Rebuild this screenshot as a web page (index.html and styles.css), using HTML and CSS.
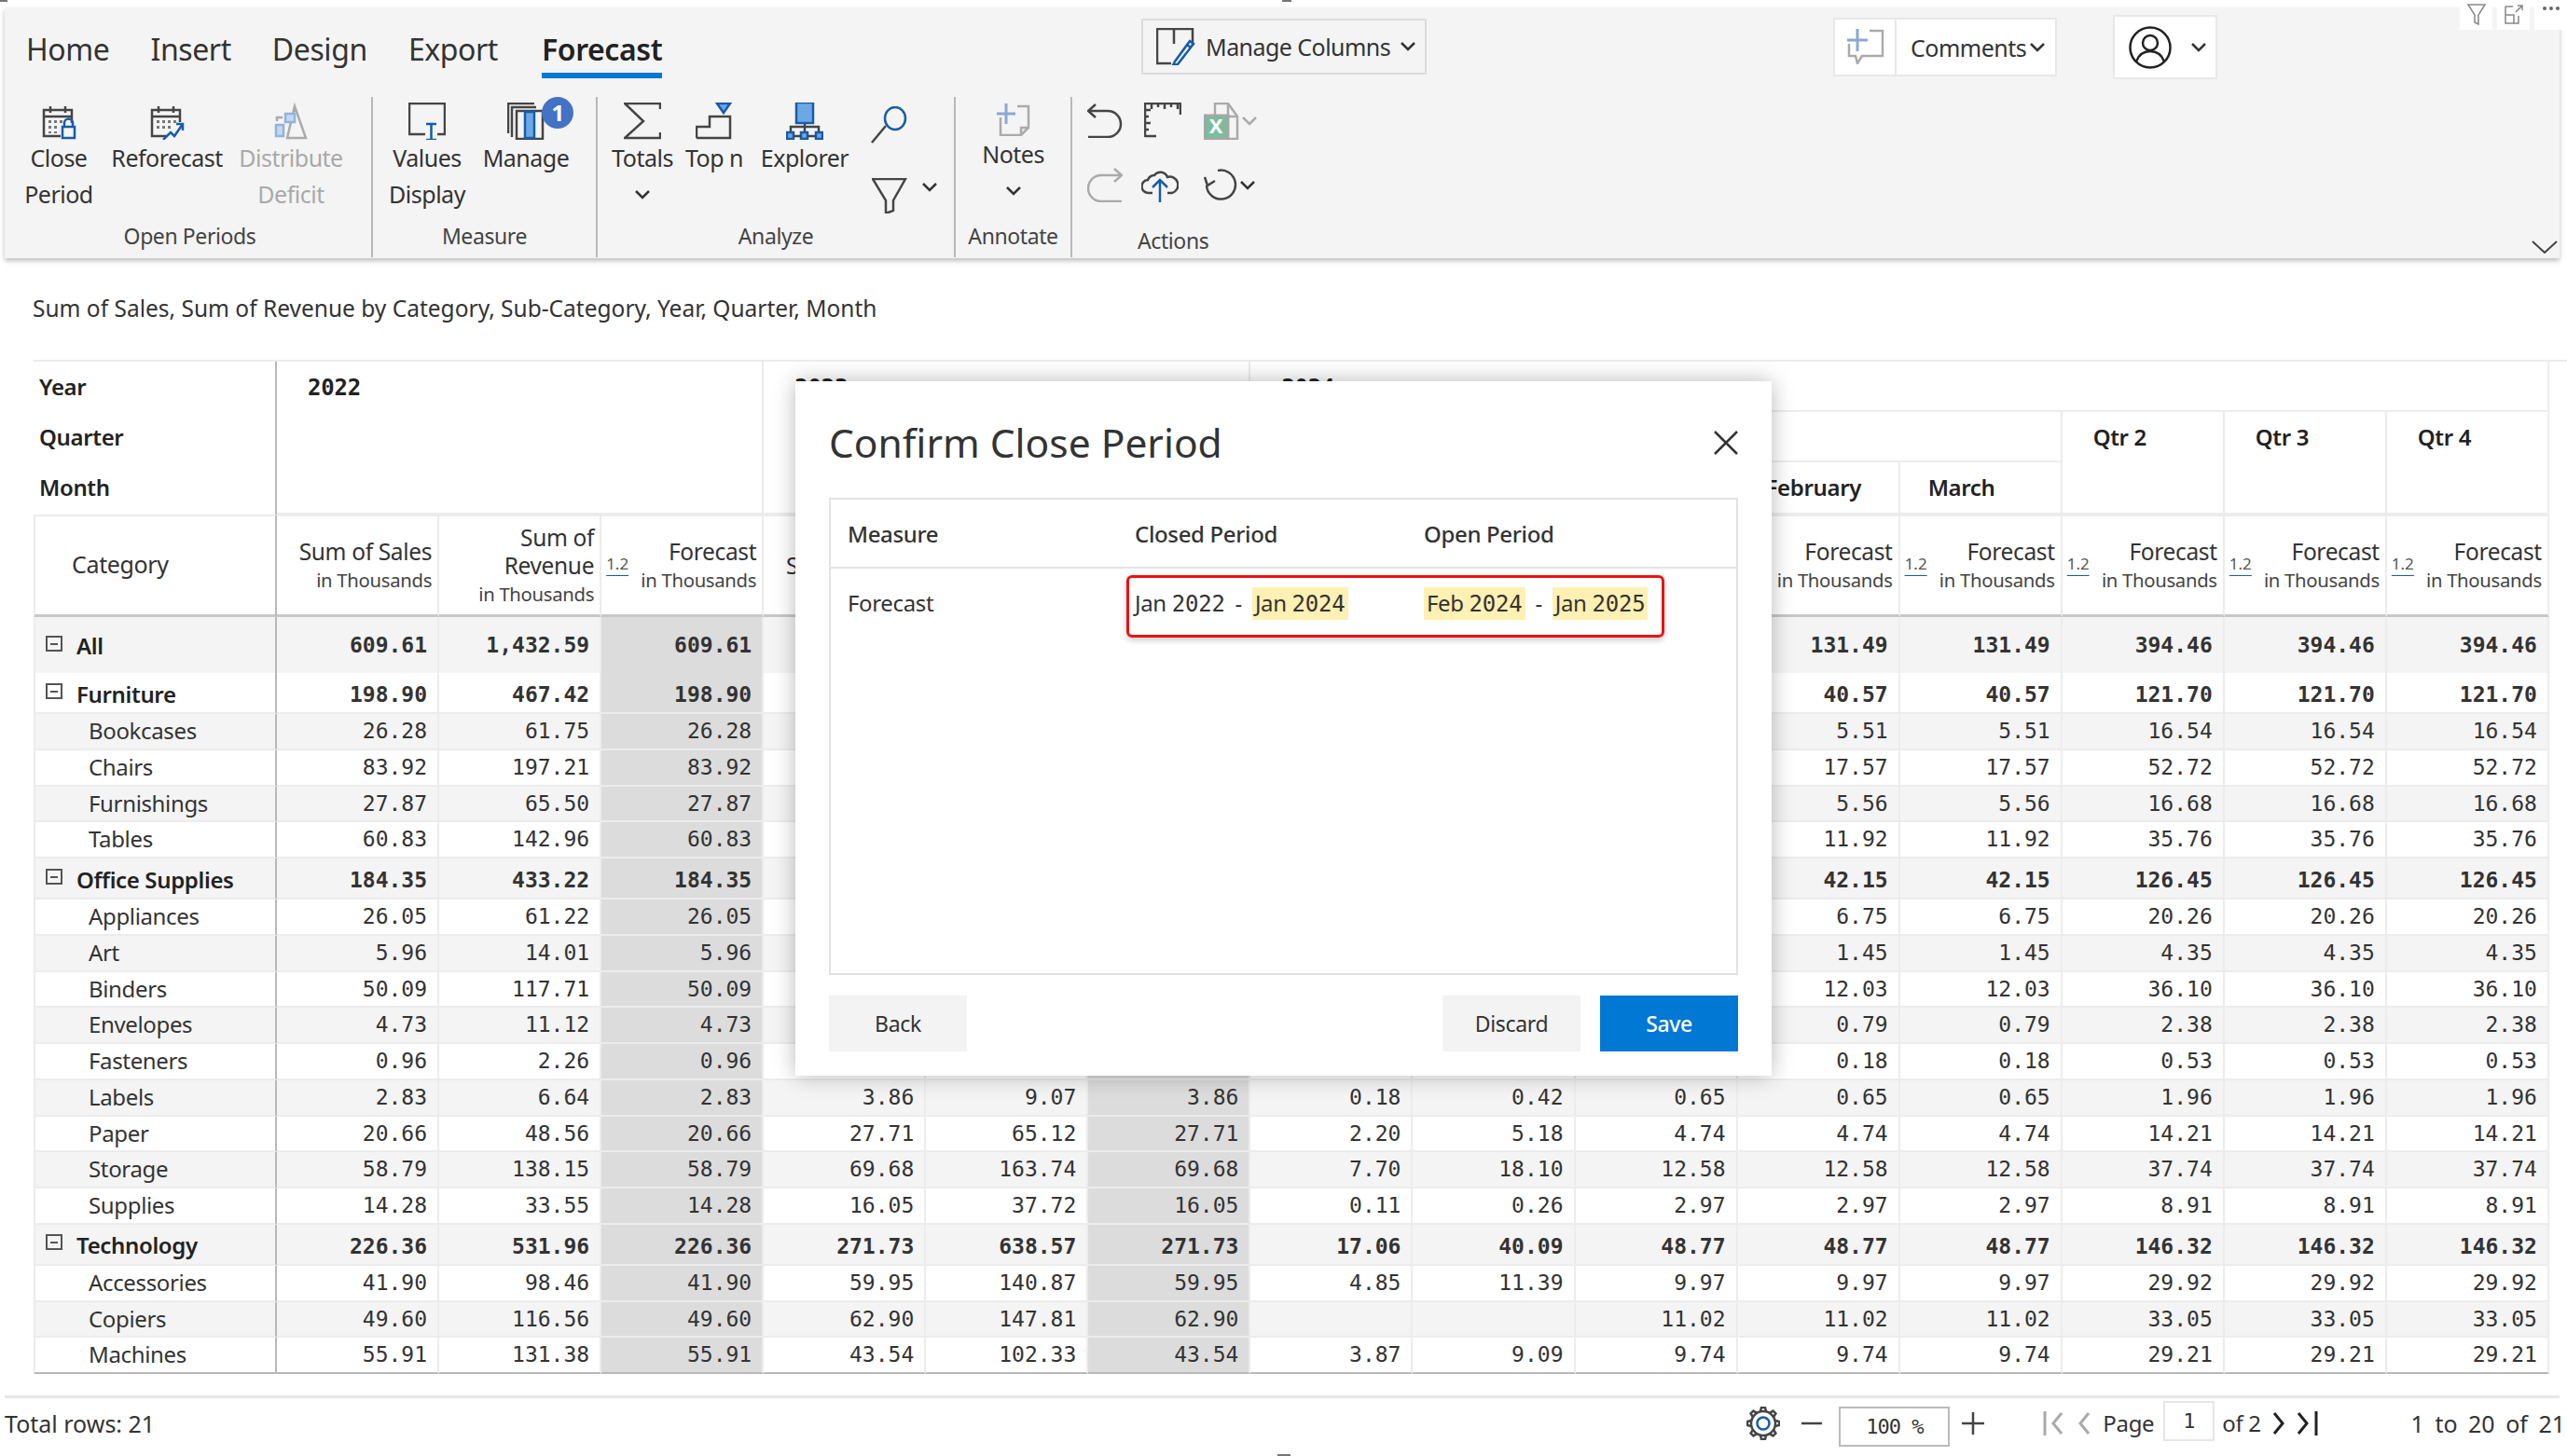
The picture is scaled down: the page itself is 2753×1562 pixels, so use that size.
FILE: index.html
```html
<!DOCTYPE html>
<html lang="en">
<head>
    <meta charset="UTF-8">
    <title>Confirm Close Period</title>
    <link rel="stylesheet" href="styles.css">
</head>
<body>
<div class="page">
    <i class="grip grip-a"></i><i class="grip grip-b"></i><i class="grip grip-c"></i>

    <!-- Ribbon -->
    <header class="ribbon">
        <div class="top-tools">
            <span><svg width="22" height="24" viewBox="0 0 22 24" class="ic thin"><path d="M2 1h18l-7 11v10l-4-2v-8z"/></svg></span>
            <span><svg width="22" height="22" viewBox="0 0 22 22" class="ic thin"><path d="M2 3h8M2 3v18h14v-8M2 12h9v9M13 9l7-7M15 2h5v5"/></svg></span>
            <span><svg width="22" height="10" viewBox="0 0 22 10" class="tool-dots"><circle cx="4" cy="5" r="2"/><circle cx="11" cy="5" r="2"/><circle cx="18" cy="5" r="2"/></svg></span>
        </div>
        <nav class="tabs">
            <a>Home</a><a>Insert</a><a>Design</a><a>Export</a><a class="active">Forecast</a>
        </nav>
        <div class="ribbon-body">
            <section class="group g-open">
                <div class="btns">
                    <div class="rbtn">
                        <svg width="40" height="40" viewBox="0 0 40 40" class="ic"><path d="M22 36H4V8h30v14M4 15h30M11 4v7M27 4v7"/><path class="dots-fill" d="M9 19h3v3H9zM15 19h3v3h-3zM21 19h3v3h-3zM9 25h3v3H9zM15 25h3v3h-3zM9 31h3v2H9zM15 31h3v2h-3z"/><path class="blue" d="M24 26h13v12H24zM26 26v-4a4 4 0 0 1 9 0v4"/></svg>
                        <span>Close<br>Period</span>
                    </div>
                    <div class="rbtn">
                        <svg width="40" height="40" viewBox="0 0 40 40" class="ic"><path d="M20 36H4V8h30v13M4 15h30M11 4v7M27 4v7"/><path class="dots-fill" d="M9 19h3v3H9zM15 19h3v3h-3zM21 19h3v3h-3zM27 19h3v3h-3zM9 25h3v3H9zM15 25h3v3h-3zM21 25h3v3h-3z"/><path class="blue" d="M16 40l8-8 4 4 9-13M30 23h7v7"/></svg>
                        <span>Reforecast</span>
                    </div>
                    <div class="rbtn off">
                        <svg width="40" height="40" viewBox="0 0 40 40" class="ic grey"><path d="M16 38l8-34 12 34zM24 4v6"/><rect class="tint" x="14" y="12" width="10" height="9"/><rect class="tint" x="4" y="24" width="8" height="12"/><path d="M5 20v-4h6"/></svg>
                        <span>Distribute<br>Deficit</span>
                    </div>
                </div>
                <div class="group-label">Open Periods</div>
            </section>

            <section class="group g-measure">
                <div class="btns">
                    <div class="rbtn">
                        <svg width="40" height="40" viewBox="0 0 40 40" class="ic"><path d="M18 34H1V1h38v33h-8"/><path class="blue" d="M19 23h11M19 40h11M24.500 23v17"/></svg>
                        <span>Values<br>Display</span>
                    </div>
                    <div class="rbtn manage">
                        <svg width="40" height="40" viewBox="0 0 40 40" class="ic"><path d="M1 33V1h28M5 37V5h26M10 39V9h28v30z"/><rect class="tint-strong" x="19" y="10" width="10" height="28"/></svg>
                        <span>Manage</span>
                        <b class="badge">1</b>
                    </div>
                </div>
                <div class="group-label">Measure</div>
            </section>

            <section class="group g-analyze">
                <div class="btns">
                    <div class="rbtn">
                        <svg width="40" height="40" viewBox="0 0 40 40" class="ic"><path d="M39 7V1H1l20 19L1 38h38v-6"/></svg>
                        <span>Totals</span>
                        <svg class="chev" width="16" height="10" viewBox="0 0 16 10"><path d="M1 1l7 7 7-7"/></svg>
                    </div>
                    <div class="rbtn">
                        <svg width="40" height="40" viewBox="0 0 40 40" class="ic"><path d="M1 38V26h14V15h14M1 38h36V15h-8"/><path class="blue tint-strong" d="M23 1h14l-7 10z"/></svg>
                        <span>Top n</span>
                    </div>
                    <div class="rbtn">
                        <svg width="40" height="40" viewBox="0 0 40 40" class="ic"><path d="M20 22v10M5 32v-6h30v6"/><rect class="blue tint-strong" x="11" y="0" width="18" height="22"/><rect class="blue tint-strong" x="1" y="32" width="7" height="7"/><rect class="blue tint-strong" x="16" y="32" width="7" height="7"/><rect class="blue tint-strong" x="32" y="32" width="7" height="7"/><path d="M8 36h8M23 36h9"/></svg>
                        <span>Explorer</span>
                    </div>
                    <div class="stack">
                        <svg width="40" height="40" viewBox="0 0 40 40" class="ic mag"><path d="M1 39l15-18"/><ellipse class="blue" cx="26" cy="13" rx="11" ry="12"/></svg>
                        <svg width="38" height="38" viewBox="0 0 38 38" class="ic filter"><path d="M1 1h35L23 24v11l-8 3V24z"/></svg>
                    </div>
                    <svg class="chev filter-chev" width="16" height="10" viewBox="0 0 16 10"><path d="M1 1l7 7 7-7"/></svg>
                </div>
                <div class="group-label">Analyze</div>
            </section>

            <section class="group g-annotate">
                <div class="btns">
                    <div class="rbtn notes">
                        <svg width="36" height="36" viewBox="0 0 36 36" class="ic grey"><path d="M22 4h12v23l-8 8H4V16M34 27h-8v8"/><path class="tint-line" d="M0 12h20M10 1v22"/></svg>
                        <span>Notes</span>
                        <svg class="chev" width="16" height="10" viewBox="0 0 16 10"><path d="M1 1l7 7 7-7"/></svg>
                    </div>
                </div>
                <div class="group-label">Annotate</div>
            </section>

            <section class="group g-actions">
                <div class="action-grid">
                    <svg width="38" height="38" viewBox="0 0 38 38" class="ic"><path d="M9 2L1 9l8 7M2 9h20a14 14 0 0 1 0 28H1"/></svg>
                    <svg width="40" height="38" viewBox="0 0 40 38" class="ic"><path d="M1 37V1h38v12M8 1v6M15 1v4M22 1v6M29 1v4M36 1v6M1 8h6M1 15h4M1 22h6M1 29h4M1 36h12"/></svg>
                    <div class="xl">
                        <svg width="38" height="40" viewBox="0 0 38 40" class="ic grey"><path d="M12 14V1h14l10 14v24H26"/><path d="M26 1v14h10"/><rect x="0" y="14" width="26" height="25" class="xl-box"/><text x="13" y="33" class="xl-x">X</text></svg>
                        <svg class="chev chev-off" width="16" height="10" viewBox="0 0 16 10"><path d="M1 1l7 7 7-7"/></svg>
                    </div>
                    <svg width="38" height="38" viewBox="0 0 38 38" class="ic grey"><path d="M29 2l8 7-8 7M36 9H15a14 14 0 0 0 0 28h22"/></svg>
                    <svg class="cloud" width="40" height="38" viewBox="0 0 40 38"><path d="M12 28H8a7 7 0 0 1-1-14 8 8 0 0 1 7-5 8 8 0 0 1 14 2 8 8 0 0 1 5 17h-5"/><path class="cloud-arrow" d="M20 38V14M12 22l8-8 8 8"/></svg>
                    <div class="xl">
                        <svg width="36" height="36" viewBox="0 0 36 36" class="ic"><path d="M15 2a15.500 15.500 0 1 1-12 16M1 9l3 9 8-5"/></svg>
                        <svg class="chev" width="16" height="10" viewBox="0 0 16 10"><path d="M1 1l7 7 7-7"/></svg>
                    </div>
                </div>
                <div class="group-label">Actions</div>
            </section>
        </div>

        <div class="manage-columns">
            <svg width="42" height="40" viewBox="0 0 42 40" class="ic"><path d="M16 38H1V1h38v18M19 1v16"/><path class="blue" d="M20 36l-2 4 5-1 17-22-4-3zM33 18l4 3"/></svg>
            <span>Manage Columns</span>
            <svg class="chev" width="16" height="10" viewBox="0 0 16 10"><path d="M1 1l7 7 7-7"/></svg>
        </div>
        <div class="comments">
            <div class="comments-icon">
                <svg width="40" height="40" viewBox="0 0 40 40" class="ic grey"><path d="M24 4h14v27H16l-5 8-2-8H2V18"/><path class="tint-line" d="M0 14h22M11 2v24"/></svg>
            </div>
            <div class="comments-text">Comments<svg class="chev" width="16" height="10" viewBox="0 0 16 10"><path d="M1 1l7 7 7-7"/></svg></div>
        </div>
        <div class="user">
            <svg width="46" height="46" viewBox="0 0 46 46" class="ic dark"><circle cx="23" cy="23" r="21.500"/><circle cx="23" cy="18" r="8"/><path d="M8 38c3-8 9-11 15-11s12 3 15 11"/></svg>
            <svg class="chev" width="16" height="10" viewBox="0 0 16 10"><path d="M1 1l7 7 7-7"/></svg>
        </div>
        <svg class="collapse" width="28" height="14" viewBox="0 0 28 14"><path d="M1 1l13 12L27 1"/></svg>
    </header>

    <div class="subtitle">Sum of Sales, Sum of Revenue by Category, Sub-Category, Year, Quarter, Month</div>

    <!-- Pivot table -->
    <div class="pivot">
        <div class="dim r1">Year</div>
        <div class="dim r2">Quarter</div>
        <div class="dim r3">Month</div>
        <div class="head y2022"><span class="mono">2022</span></div>
        <div class="head y2023"><span class="mono">2023</span></div>
        <div class="head y2024"><span class="mono">2024</span></div>
        <div class="head q1"></div>
        <div class="head q2">Qtr 2</div>
        <div class="head q3">Qtr 3</div>
        <div class="head q4">Qtr 4</div>
        <div class="head m1"></div>
        <div class="head m2">February</div>
        <div class="head m3">March</div>

        <div class="measure cat">Category</div>
        <div class="measure"><div class="mname">Sum of Sales<small>in Thousands</small></div></div>
        <div class="measure"><div class="mname">Sum of<br>Revenue<small>in Thousands</small></div></div>
        <div class="measure"><u>1.2</u><div class="mname">Forecast<small>in Thousands</small></div></div>
        <div class="measure"><div class="mname">Sum of Sales</div></div>
        <div class="measure"></div>
        <div class="measure"></div>
        <div class="measure"></div>
        <div class="measure"></div>
        <div class="measure"></div>
        <div class="measure"><div class="mname">Forecast<small>in Thousands</small></div></div>
        <div class="measure"><u>1.2</u><div class="mname">Forecast<small>in Thousands</small></div></div>
        <div class="measure"><u>1.2</u><div class="mname">Forecast<small>in Thousands</small></div></div>
        <div class="measure"><u>1.2</u><div class="mname">Forecast<small>in Thousands</small></div></div>
        <div class="measure"><u>1.2</u><div class="mname">Forecast<small>in Thousands</small></div></div>

        <div class="row total shade"><div><i class="tree"></i>All</div><div>609.61</div><div>1,432.59</div><div>609.61</div><div></div><div></div><div></div><div></div><div></div><div></div><div>131.49</div><div>131.49</div><div>394.46</div><div>394.46</div><div>394.46</div></div>
        <div class="row group-row"><div><i class="tree"></i>Furniture</div><div>198.90</div><div>467.42</div><div>198.90</div><div></div><div></div><div></div><div></div><div></div><div></div><div>40.57</div><div>40.57</div><div>121.70</div><div>121.70</div><div>121.70</div></div>
        <div class="row shade"><div>Bookcases</div><div>26.28</div><div>61.75</div><div>26.28</div><div></div><div></div><div></div><div></div><div></div><div></div><div>5.51</div><div>5.51</div><div>16.54</div><div>16.54</div><div>16.54</div></div>
        <div class="row"><div>Chairs</div><div>83.92</div><div>197.21</div><div>83.92</div><div></div><div></div><div></div><div></div><div></div><div></div><div>17.57</div><div>17.57</div><div>52.72</div><div>52.72</div><div>52.72</div></div>
        <div class="row shade"><div>Furnishings</div><div>27.87</div><div>65.50</div><div>27.87</div><div></div><div></div><div></div><div></div><div></div><div></div><div>5.56</div><div>5.56</div><div>16.68</div><div>16.68</div><div>16.68</div></div>
        <div class="row"><div>Tables</div><div>60.83</div><div>142.96</div><div>60.83</div><div></div><div></div><div></div><div></div><div></div><div></div><div>11.92</div><div>11.92</div><div>35.76</div><div>35.76</div><div>35.76</div></div>
        <div class="row group-row shade"><div><i class="tree"></i>Office Supplies</div><div>184.35</div><div>433.22</div><div>184.35</div><div></div><div></div><div></div><div></div><div></div><div></div><div>42.15</div><div>42.15</div><div>126.45</div><div>126.45</div><div>126.45</div></div>
        <div class="row"><div>Appliances</div><div>26.05</div><div>61.22</div><div>26.05</div><div></div><div></div><div></div><div></div><div></div><div></div><div>6.75</div><div>6.75</div><div>20.26</div><div>20.26</div><div>20.26</div></div>
        <div class="row shade"><div>Art</div><div>5.96</div><div>14.01</div><div>5.96</div><div></div><div></div><div></div><div></div><div></div><div></div><div>1.45</div><div>1.45</div><div>4.35</div><div>4.35</div><div>4.35</div></div>
        <div class="row"><div>Binders</div><div>50.09</div><div>117.71</div><div>50.09</div><div></div><div></div><div></div><div></div><div></div><div></div><div>12.03</div><div>12.03</div><div>36.10</div><div>36.10</div><div>36.10</div></div>
        <div class="row shade"><div>Envelopes</div><div>4.73</div><div>11.12</div><div>4.73</div><div></div><div></div><div></div><div></div><div></div><div></div><div>0.79</div><div>0.79</div><div>2.38</div><div>2.38</div><div>2.38</div></div>
        <div class="row"><div>Fasteners</div><div>0.96</div><div>2.26</div><div>0.96</div><div></div><div></div><div></div><div></div><div></div><div></div><div>0.18</div><div>0.18</div><div>0.53</div><div>0.53</div><div>0.53</div></div>
        <div class="row shade"><div>Labels</div><div>2.83</div><div>6.64</div><div>2.83</div><div>3.86</div><div>9.07</div><div>3.86</div><div>0.18</div><div>0.42</div><div>0.65</div><div>0.65</div><div>0.65</div><div>1.96</div><div>1.96</div><div>1.96</div></div>
        <div class="row"><div>Paper</div><div>20.66</div><div>48.56</div><div>20.66</div><div>27.71</div><div>65.12</div><div>27.71</div><div>2.20</div><div>5.18</div><div>4.74</div><div>4.74</div><div>4.74</div><div>14.21</div><div>14.21</div><div>14.21</div></div>
        <div class="row shade"><div>Storage</div><div>58.79</div><div>138.15</div><div>58.79</div><div>69.68</div><div>163.74</div><div>69.68</div><div>7.70</div><div>18.10</div><div>12.58</div><div>12.58</div><div>12.58</div><div>37.74</div><div>37.74</div><div>37.74</div></div>
        <div class="row"><div>Supplies</div><div>14.28</div><div>33.55</div><div>14.28</div><div>16.05</div><div>37.72</div><div>16.05</div><div>0.11</div><div>0.26</div><div>2.97</div><div>2.97</div><div>2.97</div><div>8.91</div><div>8.91</div><div>8.91</div></div>
        <div class="row group-row shade"><div><i class="tree"></i>Technology</div><div>226.36</div><div>531.96</div><div>226.36</div><div>271.73</div><div>638.57</div><div>271.73</div><div>17.06</div><div>40.09</div><div>48.77</div><div>48.77</div><div>48.77</div><div>146.32</div><div>146.32</div><div>146.32</div></div>
        <div class="row"><div>Accessories</div><div>41.90</div><div>98.46</div><div>41.90</div><div>59.95</div><div>140.87</div><div>59.95</div><div>4.85</div><div>11.39</div><div>9.97</div><div>9.97</div><div>9.97</div><div>29.92</div><div>29.92</div><div>29.92</div></div>
        <div class="row shade"><div>Copiers</div><div>49.60</div><div>116.56</div><div>49.60</div><div>62.90</div><div>147.81</div><div>62.90</div><div></div><div></div><div>11.02</div><div>11.02</div><div>11.02</div><div>33.05</div><div>33.05</div><div>33.05</div></div>
        <div class="row last"><div>Machines</div><div>55.91</div><div>131.38</div><div>55.91</div><div>43.54</div><div>102.33</div><div>43.54</div><div>3.87</div><div>9.09</div><div>9.74</div><div>9.74</div><div>9.74</div><div>29.21</div><div>29.21</div><div>29.21</div></div>
    </div>

    <!-- Footer -->
    <footer class="footer">
        <span class="total-rows">Total rows: 21</span>
        <div class="pager">
            <svg width="36" height="36" viewBox="0 0 36 36" class="ic gear"><g><path d="M15 5l1-4h4l1 4"/><path d="M15 5l1-4h4l1 4" transform="rotate(45 18 18)"/><path d="M15 5l1-4h4l1 4" transform="rotate(90 18 18)"/><path d="M15 5l1-4h4l1 4" transform="rotate(135 18 18)"/><path d="M15 5l1-4h4l1 4" transform="rotate(180 18 18)"/><path d="M15 5l1-4h4l1 4" transform="rotate(225 18 18)"/><path d="M15 5l1-4h4l1 4" transform="rotate(270 18 18)"/><path d="M15 5l1-4h4l1 4" transform="rotate(315 18 18)"/></g><circle cx="18" cy="18" r="13"/><circle class="blue" cx="18" cy="18" r="6.500"/></svg>
            <svg class="zoom-btn minus" width="22" height="22" viewBox="0 0 22 22"><path d="M0 11h22"/></svg>
            <div class="zoom-box">100 %</div>
            <svg class="zoom-btn plus" width="24" height="24" viewBox="0 0 24 24"><path d="M0 12h24M12 0v24"/></svg>
            <svg class="nav first" width="24" height="26" viewBox="0 0 24 26"><path d="M2 0v26M20 2l-9 11 9 11"/></svg>
            <svg class="nav prev" width="14" height="26" viewBox="0 0 14 26"><path d="M12 2L3 13l9 11"/></svg>
            <span class="page-label">Page</span>
            <div class="page-box">1</div>
            <span class="of">of 2</span>
            <svg class="nav on next" width="14" height="26" viewBox="0 0 14 26"><path d="M2 2l9 11-9 11"/></svg>
            <svg class="nav on last" width="24" height="26" viewBox="0 0 24 26"><path d="M2 2l9 11-9 11M21 0v26"/></svg>
            <span class="range">1 to 20 of 21</span>
        </div>
    </footer>

    <!-- Dialog -->
    <div class="modal">
        <div class="modal-title">
            <h2>Confirm Close Period</h2>
            <svg width="26" height="26" viewBox="0 0 26 26"><path d="M1 1l24 24M25 1L1 25"/></svg>
        </div>
        <div class="modal-box">
            <div class="modal-row modal-head">
                <div>Measure</div><div>Closed Period</div><div>Open Period</div>
            </div>
            <div class="modal-row modal-data">
                <div>Forecast</div>
                <div>Jan <span class="mono">2022</span> <span class="dash">-</span> <mark>Jan <span class="mono">2024</span></mark></div>
                <div><mark>Feb <span class="mono">2024</span></mark> <span class="dash">-</span> <mark>Jan <span class="mono">2025</span></mark></div>
                <div class="red-box"></div>
            </div>
        </div>
        <div class="modal-actions">
            <button>Back</button>
            <button class="push">Discard</button>
            <button class="primary">Save</button>
        </div>
    </div>
</div>
</body>
</html>
```

FILE: styles.css
```css
* {
    box-sizing: border-box;
}
body {
    margin: 0;
    font-family: "Noto Sans", "Open Sans", sans-serif;
    color: #333;
    background-color: white;
}
.page {
    position: relative;
    width: 2753px;
    height: 1562px;
    overflow: hidden;
    padding-top: 8px;
}
.grip {
    position: absolute;
    background-color: #777;
    height: 2px;
}
.grip-a { left: 0; top: 0; width: 8px; }
.grip-b { left: 1375px; top: 0; width: 10px; }
.grip-c { left: 1370px; bottom: 0; width: 14px; }

/* icons */
.ic {
    fill: none;
    stroke: #454545;
    stroke-width: 2.5;
    flex-shrink: 0;
}
.ic.thin { stroke: #888; stroke-width: 1.5; }
.ic.grey { stroke: #aaa; }
.ic.dark { stroke: #222; stroke-width: 2.5; }
.ic .blue { stroke: #155cac; fill: none; }
.ic .tint { stroke: #8fb4dc; fill: #c4d9ef; }
.ic .tint-strong { fill: #6ea8e4; stroke: #155cac; }
.ic .tint-line { stroke: #8aa8d6; stroke-width: 3; }
.ic .dots-fill { fill: #777; stroke: none; }
.ic .xl-box { fill: #7dbb9e; stroke: #a6a6a6; stroke-width: 3; }
.ic .xl-x { fill: white; stroke: none; font-size: 22px; font-weight: 700; text-anchor: middle; }
.chev {
    fill: none;
    stroke: #333;
    stroke-width: 2.5;
}
.chev-off { stroke: #aaa; }
.cloud {
    fill: none;
    stroke: #454545;
    stroke-width: 2.5;
    margin-left: -3px;
}
.cloud-arrow { stroke: #155cac; }
.tool-dots { fill: #666; }

/* ribbon */
.ribbon {
    position: relative;
    margin: 0 8px 0 5px;
    height: 269px;
    background-color: #f4f4f4;
    box-shadow: 0 3px 5px rgba(0, 0, 0, 0.25);
}
.tabs {
    display: flex;
    gap: 44px;
    height: 76px;
    padding: 20px 0 0 23px;
    font-size: 32px;
}
.tabs a {
    height: 56px;
    line-height: 50px;
    letter-spacing: -0.4px;
}
.tabs .active {
    margin-left: 3px;
    font-weight: 600;
    color: #222;
    border-bottom: 6px solid #0078d4;
}
.ribbon-body {
    display: flex;
    margin-top: 20px;
    height: 172px;
}
.group {
    display: flex;
    flex-direction: column;
    justify-content: space-between;
    border-right: 2px solid #b8b8b8;
    padding-top: 6px;
}
.g-open { width: 395px; }
.g-measure { width: 241px; }
.g-analyze { width: 384px; }
.g-annotate { width: 125px; }
.g-actions { width: 300px; border-right: none; }
.btns {
    display: grid;
}
.g-open .btns { grid-template-columns: 116px 116px 150px; }
.g-measure .btns { grid-template-columns: 116px 96px; }
.g-analyze .btns { grid-template-columns: 96px 58px 136px 46px 40px; }
.rbtn {
    position: relative;
    display: flex;
    flex-direction: column;
    align-items: center;
    text-align: center;
    font-size: 25px;
    line-height: 39px;
    letter-spacing: -0.5px;
    white-space: nowrap;
}
.rbtn .chev { margin-top: 15px; }
.rbtn.off { color: #a9a9a9; }
.badge {
    position: absolute;
    left: 65px;
    top: -6px;
    width: 34px;
    height: 34px;
    border-radius: 50%;
    background-color: #4472c4;
    color: white;
    font-size: 24px;
    line-height: 34px;
}
.stack {
    display: flex;
    flex-direction: column;
    align-items: center;
}
.stack .mag { margin-top: 4px; }
.stack .filter { margin-top: 37px; }
.filter-chev { margin: 86px 0 0 12px; }
.group-label {
    text-align: center;
    font-size: 23px;
    line-height: 40px;
    letter-spacing: -0.4px;
    margin-bottom: 3px;
    color: #444;
}
.g-open .group-label { padding-left: 4px; }
.g-actions .group-label {
    text-align: left;
    padding-left: 70px;
    margin-bottom: -2px;
}
.action-grid {
    display: grid;
    grid-template-columns: 61px 64px 80px;
    grid-auto-rows: 69px;
    height: 128px;
    padding-left: 16px;
}
.xl {
    display: flex;
    align-items: center;
    height: 40px;
    gap: 3px;
}
.manage-columns {
    position: absolute;
    left: 1219px;
    top: 12px;
    width: 306px;
    height: 60px;
    display: flex;
    align-items: center;
    gap: 11px;
    padding-left: 14px;
    border: 2px solid #dcdcdc;
    font-size: 25px;
    letter-spacing: -0.55px;
}
.comments {
    position: absolute;
    left: 1961px;
    top: 11px;
    width: 240px;
    height: 63px;
    display: flex;
    background-color: white;
    border: 2px solid #e8e8e8;
    font-size: 25px;
    letter-spacing: -0.5px;
}
.comments-icon {
    width: 66px;
    padding: 8px 0 0 13px;
    border-right: 2px solid #e8e8e8;
}
.comments-text {
    display: flex;
    align-items: center;
    gap: 4px;
    padding-left: 15px;
}
.user {
    position: absolute;
    left: 2261px;
    top: 8px;
    width: 112px;
    height: 69px;
    display: flex;
    align-items: center;
    gap: 21px;
    padding-left: 15px;
    background-color: white;
    border: 2px solid #e8e8e8;
}
.top-tools {
    position: absolute;
    right: -8px;
    top: -8px;
    display: flex;
    gap: 5px;
}
.top-tools span {
    width: 35px;
    height: 32px;
    background-color: white;
    display: flex;
    justify-content: center;
    padding-top: 4px;
}
.collapse {
    position: absolute;
    right: 2px;
    top: 250px;
    fill: none;
    stroke: #444;
    stroke-width: 2;
}

.subtitle {
    margin-top: 33px;
    height: 42px;
    padding-left: 35px;
    font-size: 24.500px;
    line-height: 42px;
}

/* pivot */
.pivot {
    display: grid;
    grid-template-columns: 261px repeat(14, 174.07px);
    grid-template-rows: 54px 54px 56px 110px;
    margin: 34px 0 0 36px;
    border-top: 2px solid #ececec;
    font-size: 24px;
    letter-spacing: -0.35px;
}
.mono {
    font-family: "DejaVu Sans Mono", monospace;
    letter-spacing: -0.2px;
}
.dim {
    grid-column: 1;
    border-right: 2px solid #b8b8b8;
    padding-left: 6px;
    font-weight: 600;
    line-height: 54px;
    color: #222;
}
.r1 { grid-row: 1; }
.r2 { grid-row: 2; }
.r3 { grid-row: 3; }
.head {
    padding-left: 33px;
    font-weight: 600;
    line-height: 54px;
    color: #222;
    border-right: 2px solid #ececec;
    border-bottom: 2px solid #ececec;
}
.y2022 { grid-column: 2 / 5; grid-row: 1 / 4; }
.y2023 { grid-column: 5 / 8; grid-row: 1 / 4; }
.y2024 { grid-column: 8 / 16; grid-row: 1; }
.q1 { grid-column: 8 / 13; grid-row: 2; }
.q2 { grid-column: 13; grid-row: 2 / 4; }
.q3 { grid-column: 14; grid-row: 2 / 4; }
.q4 { grid-column: 15; grid-row: 2 / 4; }
.m1 { grid-column: 8 / 11; grid-row: 3; padding-left: 30px; }
.m2 { grid-column: 11; grid-row: 3; padding-left: 30px; }
.m3 { grid-column: 12; grid-row: 3; padding-left: 30px; }
.measure {
    display: flex;
    align-items: center;
    justify-content: space-between;
    padding: 0 6px 0 5px;
    text-align: right;
    font-size: 24.500px;
    line-height: 30px;
    border-top: 2px solid #ececec;
    border-right: 2px solid #ececec;
    border-bottom: 3px solid #c8c8c8;
}
.measure .mname {
    margin-left: auto;
}
.measure small {
    display: block;
    font-size: 20.300px;
    letter-spacing: -0.3px;
    color: #444;
}
.measure u {
    font-size: 17px;
    color: #555;
    text-decoration-color: #155cac;
    text-underline-offset: 6px;
    margin-top: -4px;
    letter-spacing: 0;
}
.measure.cat {
    border-left: 2px solid #ececec;
    border-right-color: #b8b8b8;
    padding: 0 0 3px 39px;
    font-size: 25px;
}
.row {
    display: contents;
}
.row > div {
    height: 38.75px;
    line-height: 37.500px;
    padding-right: 11px;
    text-align: right;
    font-family: "DejaVu Sans Mono", monospace;
    font-size: 23px;
    letter-spacing: 0;
    background-color: white;
    border-right: 2px solid #ececec;
    border-bottom: 2px solid #ececec;
}
.row > div:first-child {
    display: flex;
    align-items: center;
    padding: 0 0 1px 57px;
    font-family: "Noto Sans", "Open Sans", sans-serif;
    font-size: 24px;
    letter-spacing: -0.35px;
    text-align: left;
    border-left: 2px solid #ececec;
    border-right-color: #b8b8b8;
}
.row.shade > div {
    background-color: #f4f4f4;
}
.row > div:nth-child(4),
.row > div:nth-child(7),
.row.shade > div:nth-child(4),
.row.shade > div:nth-child(7) {
    background-color: #dcdcdc;
}
.row.group-row > div {
    height: 44px;
    line-height: 47px;
    font-weight: 700;
}
.row.group-row > div:first-child,
.row.total > div:first-child {
    padding: 2px 0 0 11px;
    font-weight: 600;
    color: #222;
}
.row.total > div {
    height: 60px;
    line-height: 60px;
    font-weight: 700;
    border-bottom: none;
}
.row.last > div {
    border-bottom-color: #b8b8b8;
}
.tree {
    position: relative;
    display: inline-block;
    width: 18px;
    height: 17px;
    margin: -6px 15px 0 0;
    border: 2px solid #555;
}
.tree::after {
    content: "";
    position: absolute;
    left: 3px;
    right: 3px;
    top: 6px;
    height: 2px;
    background-color: #555;
}

/* footer */
.footer {
    display: flex;
    align-items: center;
    height: 56px;
    margin: 23px 8px 0 5px;
    border-top: 3px solid #e6e6e6;
    font-size: 24px;
    letter-spacing: -0.35px;
}
.total-rows {
    font-size: 25px;
    letter-spacing: 0;
}
.pager {
    display: flex;
    align-items: center;
    margin-left: auto;
}
.zoom-btn {
    fill: none;
    stroke: #444;
    stroke-width: 2.5;
}
.gear { margin-right: 23px; }
.minus { margin-right: 18px; }
.zoom-box {
    width: 119px;
    height: 43px;
    margin: 8px 13px 0 0;
    border: 2px solid #bbb;
    text-align: center;
    line-height: 40px;
    font-family: "DejaVu Sans Mono", monospace;
    font-size: 22px;
    letter-spacing: -1px;
}
.plus { margin-right: 63px; }
.nav {
    fill: none;
    stroke: #aaa;
    stroke-width: 3;
}
.nav.on { stroke: #222; }
.first { margin-right: 13px; }
.prev { margin-right: 13px; }
.page-box {
    width: 55px;
    height: 43px;
    margin: -4px 8px 0 10px;
    border: 2px solid #e6e6e6;
    text-align: center;
    line-height: 40px;
    font-family: "DejaVu Sans Mono", monospace;
    font-size: 22px;
}
.of { margin-right: 12px; }
.next { margin-right: 12px; }
.last { margin-right: 99px; }
.range {
    white-space: nowrap;
    font-size: 25px;
    letter-spacing: 0;
    word-spacing: 5px;
    margin-right: -6px;
}

/* dialog */
.modal {
    position: absolute;
    left: 853px;
    top: 409px;
    width: 1047px;
    height: 745px;
    padding: 0 36px;
    background-color: white;
    box-shadow: 0 0 22px rgba(0, 0, 0, 0.28);
}
.modal-title {
    display: flex;
    align-items: center;
    justify-content: space-between;
    height: 125px;
    padding-top: 6px;
}
.modal-title h2 {
    margin: 0;
    font-size: 42.500px;
    font-weight: 400;
}
.modal-title svg {
    fill: none;
    stroke: #333;
    stroke-width: 2.5;
}
.modal-box {
    height: 512px;
    border: 2px solid #e2e2e2;
}
.modal-row {
    position: relative;
    display: grid;
    grid-template-columns: 308px 310px 1fr;
    padding-left: 18px;
    font-size: 24px;
    letter-spacing: -0.35px;
}
.modal-head {
    height: 74px;
    align-items: center;
    font-weight: 500;
    border-bottom: 2px solid #e2e2e2;
}
.modal-data {
    padding-top: 20px;
    line-height: 34px;
}
.modal-data mark {
    display: inline-block;
    padding: 0 3px;
    background-color: #fff0b3;
    color: inherit;
}
.modal-data > div {
    white-space: nowrap;
}
.dash {
    margin: 0 5px;
}
.red-box {
    position: absolute;
    left: 317px;
    top: 7px;
    width: 577px;
    height: 67px;
    border: 3px solid #ee1111;
    border-radius: 6px;
    box-shadow: 0 3px 6px rgba(0, 0, 0, 0.2);
}
.modal-actions {
    display: flex;
    gap: 21px;
    margin-top: 22px;
}
.modal-actions button {
    width: 148px;
    height: 60px;
    border: none;
    background-color: #f3f3f3;
    color: #333;
    font-family: "Noto Sans", "Open Sans", sans-serif;
    font-size: 23px;
    letter-spacing: -0.35px;
}
.modal-actions .push {
    margin-left: auto;
}
.modal-actions .primary {
    background-color: #0078d4;
    color: white;
    font-weight: 500;
}
```
